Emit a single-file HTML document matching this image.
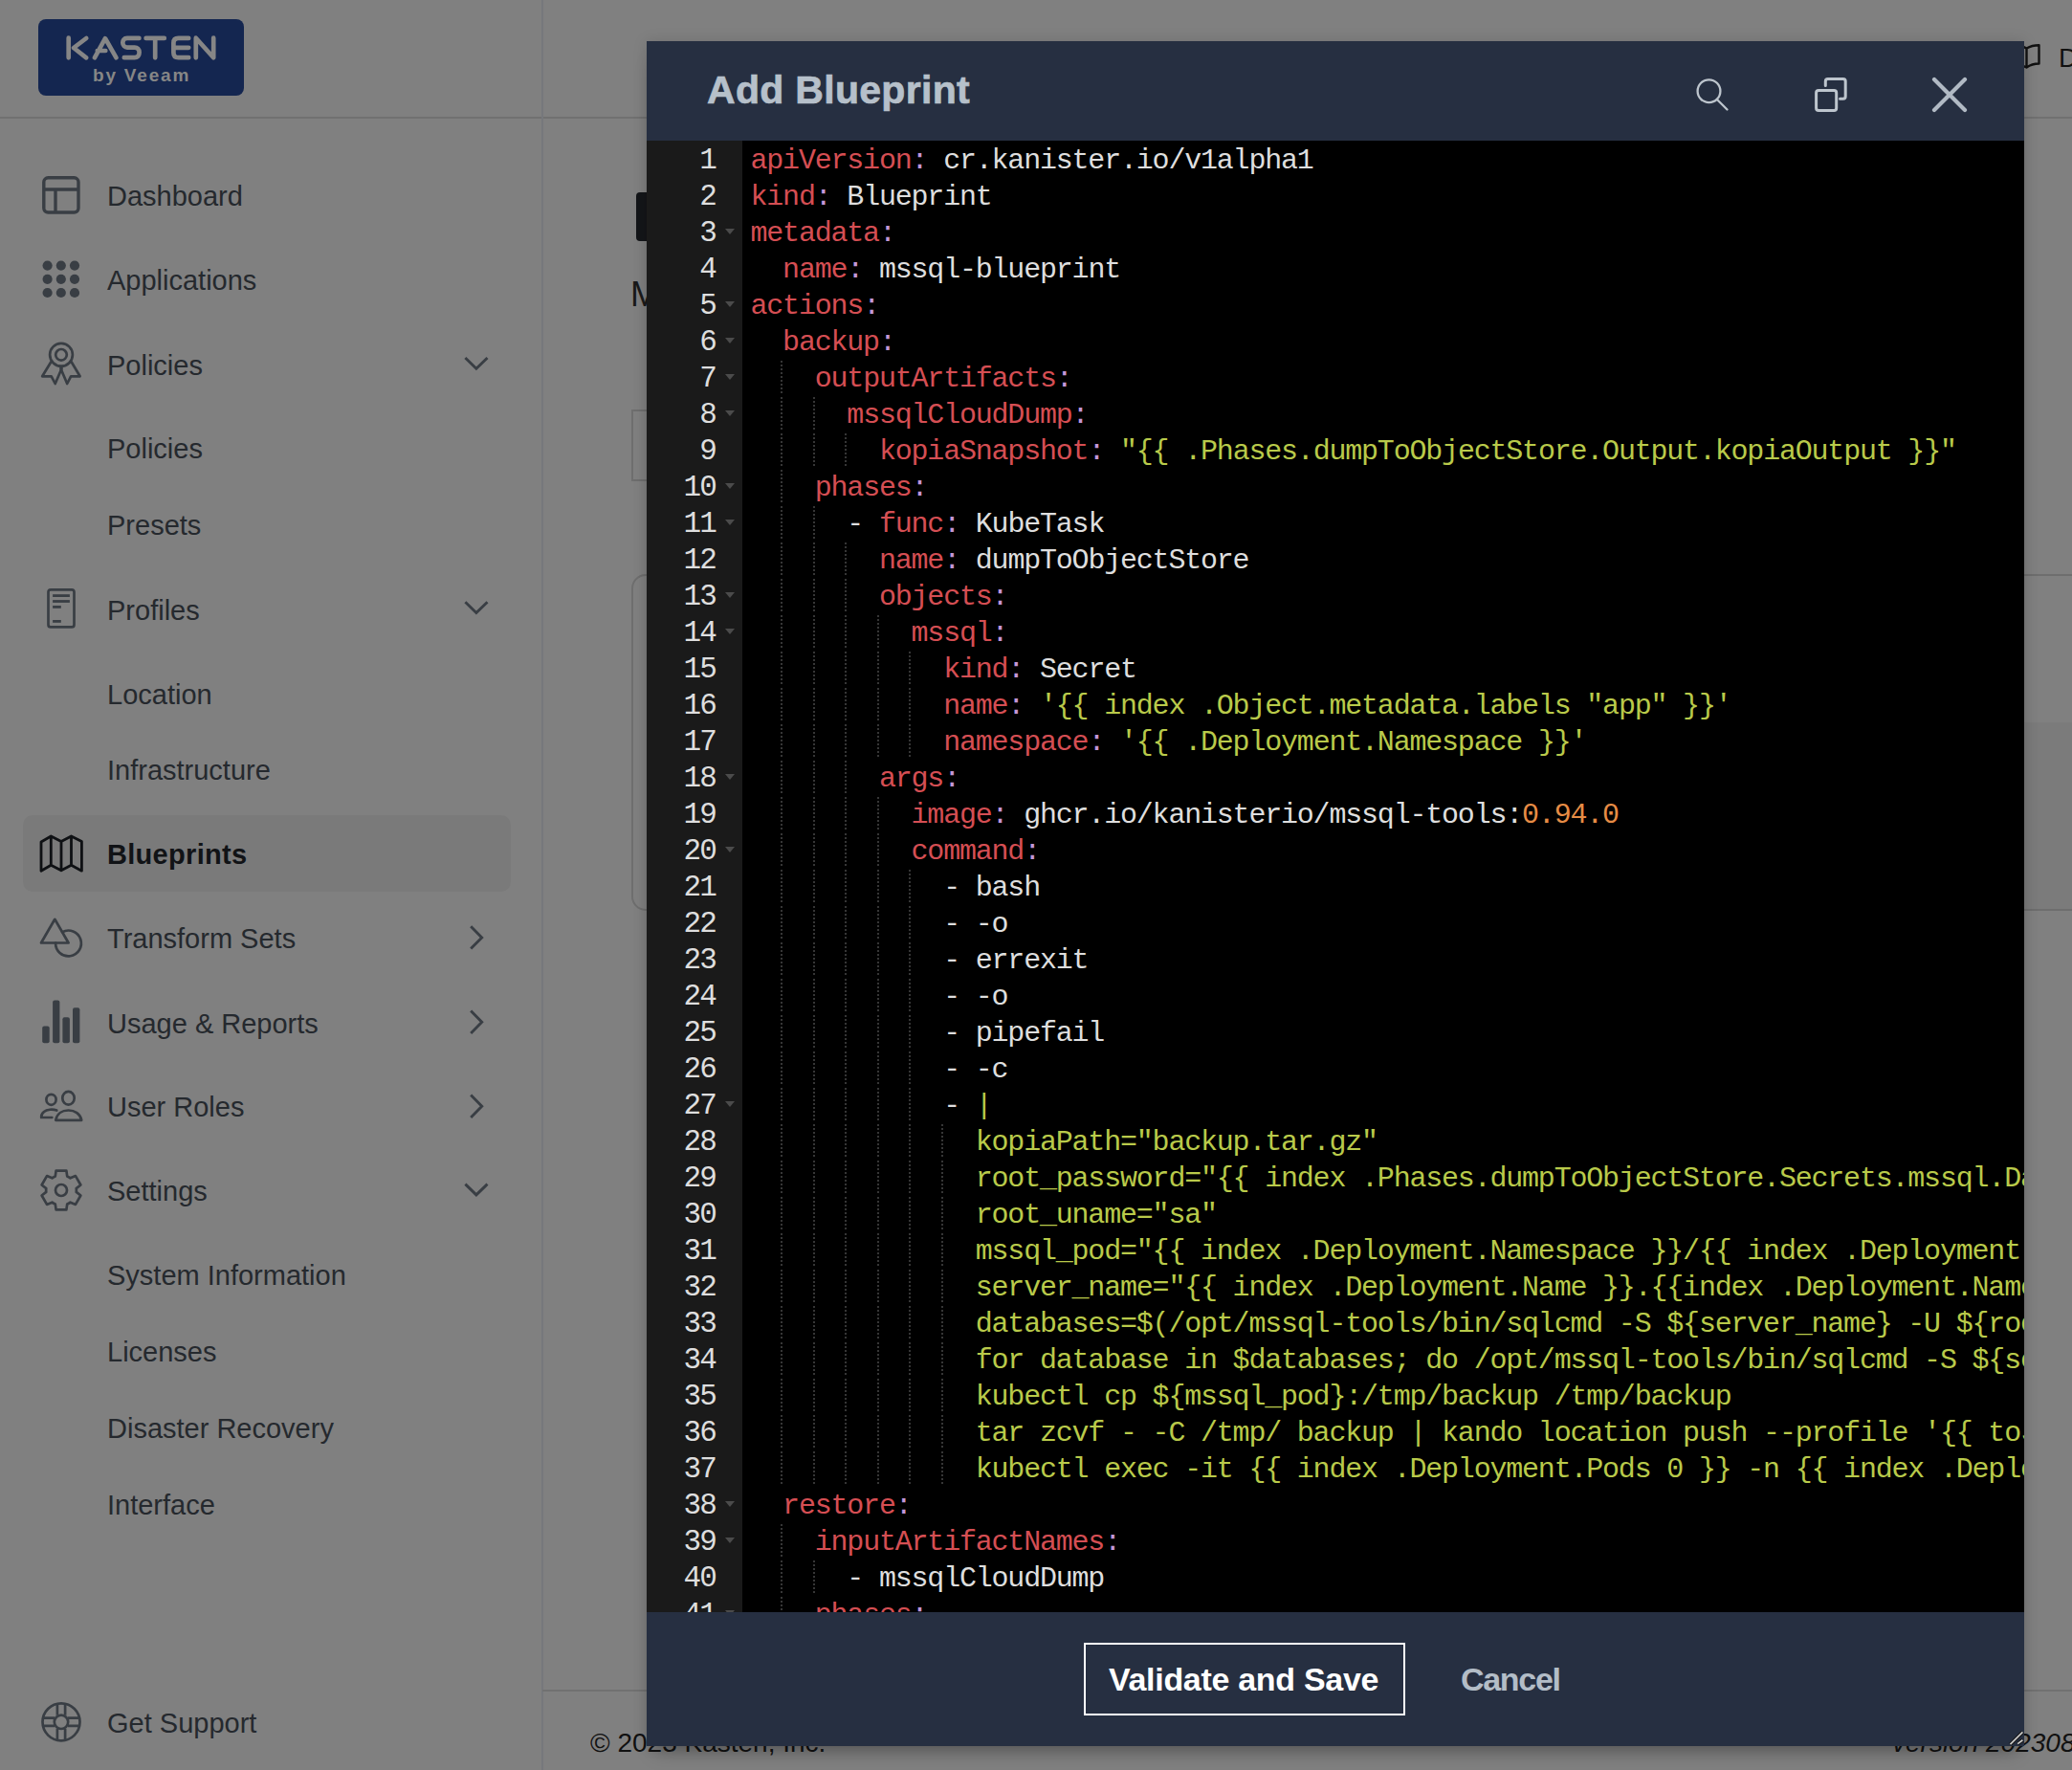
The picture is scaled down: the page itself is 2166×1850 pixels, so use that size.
<!DOCTYPE html>
<html><head><meta charset="utf-8"><style>
html,body{margin:0;padding:0;}
body{width:2166px;height:1850px;position:relative;overflow:hidden;background:#808080;font-family:"Liberation Sans",sans-serif;}
.abs{position:absolute;}
.si{position:absolute;left:112px;font-size:29px;line-height:29px;color:#25292e;white-space:nowrap;letter-spacing:0px;}
.si.b{font-weight:bold;color:#111316;letter-spacing:0.3px;}
.ic{position:absolute;}
#modal{position:absolute;left:676px;top:43px;width:1440px;height:1782px;background:#262f41;box-shadow:0 14px 18px -8px rgba(0,0,0,0.28),0 0 14px rgba(0,0,0,0.13);}
#hdr{position:absolute;left:0;top:0;width:1440px;height:104px;}
#title{position:absolute;left:63px;top:31px;font-size:41px;line-height:41px;font-weight:bold;color:#b6c0ca;letter-spacing:0.3px;white-space:nowrap;-webkit-text-stroke:0.7px #b6c0ca;}
#ed{position:absolute;left:0;top:104px;width:1440px;height:1538px;background:#000;overflow:hidden;}
#gut{position:absolute;left:0;top:0;width:100px;height:1538px;background:#1a1a1a;}
.gn{position:absolute;right:28px;height:38px;line-height:41.5px;font-family:"Liberation Mono",monospace;font-size:31px;color:#dedede;letter-spacing:-1.8px;}
.fw{position:absolute;left:82px;width:0;height:0;border-left:5px solid transparent;border-right:5px solid transparent;border-top:6px solid #4b4b4b;}
#code{position:absolute;left:100px;top:0;width:1340px;height:1538px;overflow:hidden;}
.ln{position:absolute;left:8.5px;height:38px;line-height:42px;font-family:"Liberation Mono",monospace;font-size:30px;letter-spacing:-1.2px;color:#dedede;white-space:pre;}
.k{color:#d54e53;} .p{color:#c397d8;} .s{color:#b9ca4a;} .n{color:#e78c45;}
.g{position:absolute;width:2px;height:38px;background:repeating-linear-gradient(to bottom,transparent 0 2px,#363636 2px 4px);}
#ftr{position:absolute;left:0;top:1642px;width:1440px;height:140px;}
#btn{position:absolute;left:457px;top:32px;width:336px;height:76px;border:2px solid #fff;box-sizing:border-box;}
#btnt{position:absolute;left:483px;top:0;height:140px;line-height:140px;font-size:34px;font-weight:bold;color:#fff;letter-spacing:-0.3px;white-space:nowrap;}
#cancel{position:absolute;left:851px;top:0;height:140px;line-height:140px;font-size:34px;font-weight:bold;color:#b3bdc7;letter-spacing:-1.3px;white-space:nowrap;}
</style></head><body>
<!-- sidebar & page chrome -->
<div class="abs" style="left:0;top:122px;width:2166px;height:2px;background:#717171"></div>
<div class="abs" style="left:566px;top:0;width:2px;height:1850px;background:#76787c"></div>
<div class="abs" style="left:567px;top:1766px;width:1599px;height:2px;background:#717171"></div>
<div class="abs" style="left:40px;top:20px;width:215px;height:80px;border-radius:8px;background:#142650"></div>
<div class="abs" style="left:97px;top:69px;font-size:19px;line-height:19px;font-weight:bold;color:#868686;letter-spacing:1.8px;white-space:nowrap">by Veeam</div>
<div class="abs" style="left:24px;top:852px;width:510px;height:80px;border-radius:10px;background:#7a7a7a"></div>

<svg class="ic" style="left:0;top:0" width="567" height="1850" viewBox="0 0 567 1850">
 <g stroke="#393e44" fill="none" stroke-width="3.4" stroke-linejoin="round">
  <rect x="45.8" y="185.8" width="36.2" height="36.2" rx="4.5"/>
  <path d="M45.8 198 H82 M58 198 V222"/>
 </g>
 <g stroke="#393e44" fill="none" stroke-width="2.7" stroke-linejoin="round" stroke-linecap="round">
  <circle cx="64" cy="370.8" r="11.9"/><circle cx="64" cy="370.8" r="5.8"/>
  <path d="M53.2 378.5 L44.2 393.3 H53.7 L57.7 401 L64.6 385"/>
  <path d="M74.8 378.5 L83.6 393.3 H74.1 L70.2 401 L63.4 385"/>
  <rect x="50.5" y="616.3" width="27" height="39.1" rx="2.5"/>
 </g>
 <g fill="#393e44">
  <rect x="55.1" y="621.2" width="17.8" height="2.8"/><rect x="55.1" y="627.1" width="17.8" height="2.8"/>
  <rect x="55.1" y="633" width="8.7" height="2.8"/><rect x="55.1" y="648" width="8.7" height="2.8"/>
 </g>
 <g stroke="#0f1114" fill="none" stroke-width="2.8" stroke-linejoin="round">
  <path d="M43 880 L53.3 874 L64 879.5 L74.5 874 L85.4 879.5 V910.2 L74.5 904.2 L64 909.8 L53.3 904.2 L43 910.2 Z M53.3 874 V904.2 M64 879.5 V909.8 M74.5 874 V904.2"/>
 </g>
 <g stroke="#393e44" fill="none" stroke-width="2.7" stroke-linejoin="round" stroke-linecap="round">
  <path d="M57.3 960.8 L43 985.5 H71.6 Z"/>
  <path d="M65.1 974.2 A13.4 13.4 0 1 1 58.1 985.5"/>
  <ellipse cx="53.5" cy="1149.3" rx="5.1" ry="5.5"/><ellipse cx="71.5" cy="1147.7" rx="6.2" ry="6.9"/>
  <path d="M59.3 1160.6 C55 1159 49 1159.5 46 1162 C43.5 1164 43 1166 43.2 1168 H54.3"/>
  <path d="M58.3 1170.8 C59.5 1164 65 1160.5 71.5 1160.5 C78 1160.5 84 1164 85.2 1170.8 Z"/>
 </g>
 <g stroke="#393e44" fill="none" stroke-width="2.7" stroke-linejoin="round">
  <path d="M57.80 1229.40 L58.60 1223.60 L69.40 1223.60 L70.20 1229.40 A15.40 15.40 0 0 1 73.54 1231.33 L78.97 1229.12 L84.37 1238.48 L79.74 1242.07 A15.40 15.40 0 0 1 79.74 1245.93 L84.37 1249.52 L78.97 1258.88 L73.54 1256.67 A15.40 15.40 0 0 1 70.20 1258.60 L69.40 1264.40 L58.60 1264.40 L57.80 1258.60 A15.40 15.40 0 0 1 54.46 1256.67 L49.03 1258.88 L43.63 1249.52 L48.26 1245.93 A15.40 15.40 0 0 1 48.26 1242.07 L43.63 1238.48 L49.03 1229.12 L54.46 1231.33 A15.40 15.40 0 0 1 57.80 1229.40 Z"/>
  <circle cx="64" cy="1244" r="6"/>
  <circle cx="64" cy="1799.8" r="19.5"/><circle cx="64" cy="1799.8" r="7.2"/>
  <path d="M59.9 1780.5 V1792.8 M68.1 1780.5 V1792.8 M59.9 1806.8 V1819 M68.1 1806.8 V1819 M44.7 1795.7 H57 M44.7 1803.9 H57 M71 1795.7 H83.3 M71 1803.9 H83.3"/>
 </g>
 <g stroke="#393e44" fill="none" stroke-width="2.9" stroke-linejoin="miter">
  <path d="M486.4 374 L497.9 385.3 L509.5 374 M486.4 629.2 L497.9 640.5 L509.5 629.2 M486.4 1237.6 L497.9 1248.9 L509.5 1237.6"/>
  <path d="M492.2 968.3 L503.7 980 L492.2 991.6 M492.2 1056.6 L503.7 1068.3 L492.2 1079.9 M492.2 1144.6 L503.7 1156.3 L492.2 1167.9"/>
 </g>
 <g fill="#393e44">
  <circle cx="49.6" cy="277.6" r="5.1"/><circle cx="63.8" cy="277.6" r="5.1"/><circle cx="78" cy="277.6" r="5.1"/>
  <circle cx="49.6" cy="291.8" r="5.1"/><circle cx="63.8" cy="291.8" r="5.1"/><circle cx="78" cy="291.8" r="5.1"/>
  <circle cx="49.6" cy="306" r="5.1"/><circle cx="63.8" cy="306" r="5.1"/><circle cx="78" cy="306" r="5.1"/>
  <rect x="44.2" y="1072.4" width="7.5" height="17.8" rx="2"/><rect x="55.1" y="1045.5" width="7.3" height="44.7" rx="2"/>
  <rect x="65.4" y="1063.3" width="7.5" height="26.9" rx="2"/><rect x="76" y="1053.2" width="7.4" height="37" rx="2"/>
 </g>
 <g stroke="#868686" fill="none" stroke-width="4.7" stroke-linecap="round" stroke-linejoin="round">
  <path d="M71.7 39.7 V60.3 M90.2 40 L77 50 L90.2 60.3"/>
  <path d="M98.9 60.3 L110 40.2 L121.5 60.3 M101.8 53 H110.3"/>
  <path d="M145.4 39.9 H133 C129.5 39.9 128.3 42.5 128.3 44.6 C128.3 47.5 130.5 49.6 133 49.6 H140.8 C143.5 49.6 145.6 51.5 145.6 54.8 C145.6 58.5 143.5 60.2 140.8 60.2 H129.8"/>
  <path d="M152.6 39.9 H171.8 M162.2 39.9 V60.3"/>
  <path d="M197.2 39.9 H186.5 C183 39.9 181.4 42 181.4 45 V55 C181.4 58.2 183 60.2 186.5 60.2 H197.2 M182 49.8 H197.2"/>
  <path d="M204.8 60.3 V39.7 L223.2 60.3 V39.7"/>
 </g>
</svg>
<div class="si" style="top:191.4px">Dashboard</div>
<div class="si" style="top:279.4px">Applications</div>
<div class="si" style="top:367.9px">Policies</div>
<div class="si" style="top:455.4px">Policies</div>
<div class="si" style="top:535.4px">Presets</div>
<div class="si" style="top:623.9px">Profiles</div>
<div class="si" style="top:712.0px">Location</div>
<div class="si" style="top:791.4px">Infrastructure</div>
<div class="si b" style="top:879.1px">Blueprints</div>
<div class="si" style="top:967.4px">Transform Sets</div>
<div class="si" style="top:1056.1px">Usage &amp; Reports</div>
<div class="si" style="top:1143.2px">User Roles</div>
<div class="si" style="top:1231.4px">Settings</div>
<div class="si" style="top:1319.4px">System Information</div>
<div class="si" style="top:1399.4px">Licenses</div>
<div class="si" style="top:1479.4px">Disaster Recovery</div>
<div class="si" style="top:1559.4px">Interface</div>
<div class="si" style="top:1787.1px">Get Support</div>
<!-- content behind -->
<div class="abs" style="left:665px;top:201px;width:20px;height:51px;border-radius:4px;background:#141619"></div>
<div class="abs" style="left:659px;top:290px;font-size:36px;line-height:36px;color:#1a1a1a">M</div>
<div class="abs" style="left:660px;top:428px;width:40px;height:75px;border:2px solid #6e6e6e;box-sizing:border-box"></div>
<div class="abs" style="left:660px;top:600px;width:1600px;height:352px;border:2px solid #6e6e6e;border-radius:15px;box-sizing:border-box"></div>
<div class="abs" style="left:2116px;top:755px;width:60px;height:195px;background:#7b7b7b"></div>
<svg class="abs" style="left:2100px;top:40px" width="66" height="40" viewBox="2100 40 66 40"><path d="M2105 51 C2109 48.3 2113 47.2 2118.5 50.5 C2122 48.5 2127 47.2 2131.5 47.2 V66.5 C2127 66.5 2122 68 2118.5 70.5 C2113 67.5 2109 67.5 2105 70 M2118.5 50.5 V70.5" stroke="#111" stroke-width="2.4" fill="none" stroke-linejoin="round"/></svg>
<div class="abs" style="left:2152px;top:47px;font-size:28px;line-height:28px;color:#111">D</div>
<div class="abs" style="left:617px;top:1808px;font-size:28px;line-height:28px;color:#111;white-space:nowrap">© 2023 Kasten, Inc.</div>
<div class="abs" style="left:1978px;top:1808px;font-size:28px;line-height:28px;color:#111;font-style:italic;white-space:nowrap">version 20230808</div>
<!-- modal -->
<div id="modal">
 <div id="hdr"><div id="title">Add Blueprint</div>
  <svg class="abs" style="left:0;top:0" width="1440" height="104" viewBox="676 43 1440 104">
   <g stroke="#bdc5cd" fill="none" stroke-linecap="round" stroke-linejoin="round">
    <circle cx="1786.5" cy="95.2" r="11.9" stroke-width="2.3"/>
    <path d="M1795.2 104.3 L1805.5 114.5" stroke-width="2.3"/>
    <rect x="1898.6" y="94.5" width="21.1" height="20.9" rx="2.5" stroke-width="3"/>
    <path d="M1908.3 89.5 V85 C1908.3 83.5 1909.3 82.4 1910.8 82.4 H1926.7 C1928.2 82.4 1929.2 83.5 1929.2 85 V100.8 C1929.2 102.3 1928.2 103.3 1926.7 103.3 H1923.5" stroke-width="3"/>
   </g>
   <path d="M2022 83 L2054 115 M2054 83 L2022 115" stroke="#b1bac4" stroke-width="4.2" stroke-linecap="round"/>
  </svg>
 </div>
 <div id="ed">
  <div id="gut"><div class="gn" style="top:0px">1</div>
<div class="gn" style="top:38px">2</div>
<div class="gn" style="top:76px">3</div>
<i class="fw" style="top:92px"></i>
<div class="gn" style="top:114px">4</div>
<div class="gn" style="top:152px">5</div>
<i class="fw" style="top:168px"></i>
<div class="gn" style="top:190px">6</div>
<i class="fw" style="top:206px"></i>
<div class="gn" style="top:228px">7</div>
<i class="fw" style="top:244px"></i>
<div class="gn" style="top:266px">8</div>
<i class="fw" style="top:282px"></i>
<div class="gn" style="top:304px">9</div>
<div class="gn" style="top:342px">10</div>
<i class="fw" style="top:358px"></i>
<div class="gn" style="top:380px">11</div>
<i class="fw" style="top:396px"></i>
<div class="gn" style="top:418px">12</div>
<div class="gn" style="top:456px">13</div>
<i class="fw" style="top:472px"></i>
<div class="gn" style="top:494px">14</div>
<i class="fw" style="top:510px"></i>
<div class="gn" style="top:532px">15</div>
<div class="gn" style="top:570px">16</div>
<div class="gn" style="top:608px">17</div>
<div class="gn" style="top:646px">18</div>
<i class="fw" style="top:662px"></i>
<div class="gn" style="top:684px">19</div>
<div class="gn" style="top:722px">20</div>
<i class="fw" style="top:738px"></i>
<div class="gn" style="top:760px">21</div>
<div class="gn" style="top:798px">22</div>
<div class="gn" style="top:836px">23</div>
<div class="gn" style="top:874px">24</div>
<div class="gn" style="top:912px">25</div>
<div class="gn" style="top:950px">26</div>
<div class="gn" style="top:988px">27</div>
<i class="fw" style="top:1004px"></i>
<div class="gn" style="top:1026px">28</div>
<div class="gn" style="top:1064px">29</div>
<div class="gn" style="top:1102px">30</div>
<div class="gn" style="top:1140px">31</div>
<div class="gn" style="top:1178px">32</div>
<div class="gn" style="top:1216px">33</div>
<div class="gn" style="top:1254px">34</div>
<div class="gn" style="top:1292px">35</div>
<div class="gn" style="top:1330px">36</div>
<div class="gn" style="top:1368px">37</div>
<div class="gn" style="top:1406px">38</div>
<i class="fw" style="top:1422px"></i>
<div class="gn" style="top:1444px">39</div>
<i class="fw" style="top:1460px"></i>
<div class="gn" style="top:1482px">40</div>
<div class="gn" style="top:1520px">41</div>
<i class="fw" style="top:1536px"></i>
<div class="gn" style="top:1558px">42</div>
<i class="fw" style="top:1574px"></i></div>
  <div id="code"><div class="ln" style="top:0px"><span class="k">apiVersion</span><span class="p">:</span> cr.kanister.io/v1alpha1</div>
<div class="ln" style="top:38px"><span class="k">kind</span><span class="p">:</span> Blueprint</div>
<div class="ln" style="top:76px"><span class="k">metadata</span><span class="p">:</span></div>
<div class="ln" style="top:114px">  <span class="k">name</span><span class="p">:</span> mssql-blueprint</div>
<div class="ln" style="top:152px"><span class="k">actions</span><span class="p">:</span></div>
<div class="ln" style="top:190px">  <span class="k">backup</span><span class="p">:</span></div>
<i class="g" style="left:40.0px;top:228px"></i>
<div class="ln" style="top:228px">    <span class="k">outputArtifacts</span><span class="p">:</span></div>
<i class="g" style="left:40.0px;top:266px"></i>
<i class="g" style="left:73.6px;top:266px"></i>
<div class="ln" style="top:266px">      <span class="k">mssqlCloudDump</span><span class="p">:</span></div>
<i class="g" style="left:40.0px;top:304px"></i>
<i class="g" style="left:73.6px;top:304px"></i>
<i class="g" style="left:107.2px;top:304px"></i>
<div class="ln" style="top:304px">        <span class="k">kopiaSnapshot</span><span class="p">:</span> <span class="s">&quot;{{ .Phases.dumpToObjectStore.Output.kopiaOutput }}&quot;</span></div>
<i class="g" style="left:40.0px;top:342px"></i>
<div class="ln" style="top:342px">    <span class="k">phases</span><span class="p">:</span></div>
<i class="g" style="left:40.0px;top:380px"></i>
<i class="g" style="left:73.6px;top:380px"></i>
<div class="ln" style="top:380px">      - <span class="k">func</span><span class="p">:</span> KubeTask</div>
<i class="g" style="left:40.0px;top:418px"></i>
<i class="g" style="left:73.6px;top:418px"></i>
<i class="g" style="left:107.2px;top:418px"></i>
<div class="ln" style="top:418px">        <span class="k">name</span><span class="p">:</span> dumpToObjectStore</div>
<i class="g" style="left:40.0px;top:456px"></i>
<i class="g" style="left:73.6px;top:456px"></i>
<i class="g" style="left:107.2px;top:456px"></i>
<div class="ln" style="top:456px">        <span class="k">objects</span><span class="p">:</span></div>
<i class="g" style="left:40.0px;top:494px"></i>
<i class="g" style="left:73.6px;top:494px"></i>
<i class="g" style="left:107.2px;top:494px"></i>
<i class="g" style="left:140.8px;top:494px"></i>
<div class="ln" style="top:494px">          <span class="k">mssql</span><span class="p">:</span></div>
<i class="g" style="left:40.0px;top:532px"></i>
<i class="g" style="left:73.6px;top:532px"></i>
<i class="g" style="left:107.2px;top:532px"></i>
<i class="g" style="left:140.8px;top:532px"></i>
<i class="g" style="left:174.4px;top:532px"></i>
<div class="ln" style="top:532px">            <span class="k">kind</span><span class="p">:</span> Secret</div>
<i class="g" style="left:40.0px;top:570px"></i>
<i class="g" style="left:73.6px;top:570px"></i>
<i class="g" style="left:107.2px;top:570px"></i>
<i class="g" style="left:140.8px;top:570px"></i>
<i class="g" style="left:174.4px;top:570px"></i>
<div class="ln" style="top:570px">            <span class="k">name</span><span class="p">:</span> <span class="s">&#x27;{{ index .Object.metadata.labels &quot;app&quot; }}&#x27;</span></div>
<i class="g" style="left:40.0px;top:608px"></i>
<i class="g" style="left:73.6px;top:608px"></i>
<i class="g" style="left:107.2px;top:608px"></i>
<i class="g" style="left:140.8px;top:608px"></i>
<i class="g" style="left:174.4px;top:608px"></i>
<div class="ln" style="top:608px">            <span class="k">namespace</span><span class="p">:</span> <span class="s">&#x27;{{ .Deployment.Namespace }}&#x27;</span></div>
<i class="g" style="left:40.0px;top:646px"></i>
<i class="g" style="left:73.6px;top:646px"></i>
<i class="g" style="left:107.2px;top:646px"></i>
<div class="ln" style="top:646px">        <span class="k">args</span><span class="p">:</span></div>
<i class="g" style="left:40.0px;top:684px"></i>
<i class="g" style="left:73.6px;top:684px"></i>
<i class="g" style="left:107.2px;top:684px"></i>
<i class="g" style="left:140.8px;top:684px"></i>
<div class="ln" style="top:684px">          <span class="k">image</span><span class="p">:</span> ghcr.io/kanisterio/mssql-tools:<span class="n">0.94.0</span></div>
<i class="g" style="left:40.0px;top:722px"></i>
<i class="g" style="left:73.6px;top:722px"></i>
<i class="g" style="left:107.2px;top:722px"></i>
<i class="g" style="left:140.8px;top:722px"></i>
<div class="ln" style="top:722px">          <span class="k">command</span><span class="p">:</span></div>
<i class="g" style="left:40.0px;top:760px"></i>
<i class="g" style="left:73.6px;top:760px"></i>
<i class="g" style="left:107.2px;top:760px"></i>
<i class="g" style="left:140.8px;top:760px"></i>
<i class="g" style="left:174.4px;top:760px"></i>
<div class="ln" style="top:760px">            - bash</div>
<i class="g" style="left:40.0px;top:798px"></i>
<i class="g" style="left:73.6px;top:798px"></i>
<i class="g" style="left:107.2px;top:798px"></i>
<i class="g" style="left:140.8px;top:798px"></i>
<i class="g" style="left:174.4px;top:798px"></i>
<div class="ln" style="top:798px">            - -o</div>
<i class="g" style="left:40.0px;top:836px"></i>
<i class="g" style="left:73.6px;top:836px"></i>
<i class="g" style="left:107.2px;top:836px"></i>
<i class="g" style="left:140.8px;top:836px"></i>
<i class="g" style="left:174.4px;top:836px"></i>
<div class="ln" style="top:836px">            - errexit</div>
<i class="g" style="left:40.0px;top:874px"></i>
<i class="g" style="left:73.6px;top:874px"></i>
<i class="g" style="left:107.2px;top:874px"></i>
<i class="g" style="left:140.8px;top:874px"></i>
<i class="g" style="left:174.4px;top:874px"></i>
<div class="ln" style="top:874px">            - -o</div>
<i class="g" style="left:40.0px;top:912px"></i>
<i class="g" style="left:73.6px;top:912px"></i>
<i class="g" style="left:107.2px;top:912px"></i>
<i class="g" style="left:140.8px;top:912px"></i>
<i class="g" style="left:174.4px;top:912px"></i>
<div class="ln" style="top:912px">            - pipefail</div>
<i class="g" style="left:40.0px;top:950px"></i>
<i class="g" style="left:73.6px;top:950px"></i>
<i class="g" style="left:107.2px;top:950px"></i>
<i class="g" style="left:140.8px;top:950px"></i>
<i class="g" style="left:174.4px;top:950px"></i>
<div class="ln" style="top:950px">            - -c</div>
<i class="g" style="left:40.0px;top:988px"></i>
<i class="g" style="left:73.6px;top:988px"></i>
<i class="g" style="left:107.2px;top:988px"></i>
<i class="g" style="left:140.8px;top:988px"></i>
<i class="g" style="left:174.4px;top:988px"></i>
<div class="ln" style="top:988px">            - <span class="s">|</span></div>
<i class="g" style="left:40.0px;top:1026px"></i>
<i class="g" style="left:73.6px;top:1026px"></i>
<i class="g" style="left:107.2px;top:1026px"></i>
<i class="g" style="left:140.8px;top:1026px"></i>
<i class="g" style="left:174.4px;top:1026px"></i>
<i class="g" style="left:208.0px;top:1026px"></i>
<div class="ln" style="top:1026px">              <span class="s">kopiaPath=&quot;backup.tar.gz&quot;</span></div>
<i class="g" style="left:40.0px;top:1064px"></i>
<i class="g" style="left:73.6px;top:1064px"></i>
<i class="g" style="left:107.2px;top:1064px"></i>
<i class="g" style="left:140.8px;top:1064px"></i>
<i class="g" style="left:174.4px;top:1064px"></i>
<i class="g" style="left:208.0px;top:1064px"></i>
<div class="ln" style="top:1064px">              <span class="s">root_password=&quot;{{ index .Phases.dumpToObjectStore.Secrets.mssql.Data.SA_PASSWORD | toString }}&quot;</span></div>
<i class="g" style="left:40.0px;top:1102px"></i>
<i class="g" style="left:73.6px;top:1102px"></i>
<i class="g" style="left:107.2px;top:1102px"></i>
<i class="g" style="left:140.8px;top:1102px"></i>
<i class="g" style="left:174.4px;top:1102px"></i>
<i class="g" style="left:208.0px;top:1102px"></i>
<div class="ln" style="top:1102px">              <span class="s">root_uname=&quot;sa&quot;</span></div>
<i class="g" style="left:40.0px;top:1140px"></i>
<i class="g" style="left:73.6px;top:1140px"></i>
<i class="g" style="left:107.2px;top:1140px"></i>
<i class="g" style="left:140.8px;top:1140px"></i>
<i class="g" style="left:174.4px;top:1140px"></i>
<i class="g" style="left:208.0px;top:1140px"></i>
<div class="ln" style="top:1140px">              <span class="s">mssql_pod=&quot;{{ index .Deployment.Namespace }}/{{ index .Deployment.Pods 0 }}&quot;</span></div>
<i class="g" style="left:40.0px;top:1178px"></i>
<i class="g" style="left:73.6px;top:1178px"></i>
<i class="g" style="left:107.2px;top:1178px"></i>
<i class="g" style="left:140.8px;top:1178px"></i>
<i class="g" style="left:174.4px;top:1178px"></i>
<i class="g" style="left:208.0px;top:1178px"></i>
<div class="ln" style="top:1178px">              <span class="s">server_name=&quot;{{ index .Deployment.Name }}.{{index .Deployment.Namespace}}.svc.cluster.local&quot;</span></div>
<i class="g" style="left:40.0px;top:1216px"></i>
<i class="g" style="left:73.6px;top:1216px"></i>
<i class="g" style="left:107.2px;top:1216px"></i>
<i class="g" style="left:140.8px;top:1216px"></i>
<i class="g" style="left:174.4px;top:1216px"></i>
<i class="g" style="left:208.0px;top:1216px"></i>
<div class="ln" style="top:1216px">              <span class="s">databases=$(/opt/mssql-tools/bin/sqlcmd -S ${server_name} -U ${root_uname} -P ${root_password} -Q</span></div>
<i class="g" style="left:40.0px;top:1254px"></i>
<i class="g" style="left:73.6px;top:1254px"></i>
<i class="g" style="left:107.2px;top:1254px"></i>
<i class="g" style="left:140.8px;top:1254px"></i>
<i class="g" style="left:174.4px;top:1254px"></i>
<i class="g" style="left:208.0px;top:1254px"></i>
<div class="ln" style="top:1254px">              <span class="s">for database in $databases; do /opt/mssql-tools/bin/sqlcmd -S ${server_name} -U ${root_uname}</span></div>
<i class="g" style="left:40.0px;top:1292px"></i>
<i class="g" style="left:73.6px;top:1292px"></i>
<i class="g" style="left:107.2px;top:1292px"></i>
<i class="g" style="left:140.8px;top:1292px"></i>
<i class="g" style="left:174.4px;top:1292px"></i>
<i class="g" style="left:208.0px;top:1292px"></i>
<div class="ln" style="top:1292px">              <span class="s">kubectl cp ${mssql_pod}:/tmp/backup /tmp/backup</span></div>
<i class="g" style="left:40.0px;top:1330px"></i>
<i class="g" style="left:73.6px;top:1330px"></i>
<i class="g" style="left:107.2px;top:1330px"></i>
<i class="g" style="left:140.8px;top:1330px"></i>
<i class="g" style="left:174.4px;top:1330px"></i>
<i class="g" style="left:208.0px;top:1330px"></i>
<div class="ln" style="top:1330px">              <span class="s">tar zcvf - -C /tmp/ backup | kando location push --profile &#x27;{{ toJson .Profile }}&#x27; --path</span></div>
<i class="g" style="left:40.0px;top:1368px"></i>
<i class="g" style="left:73.6px;top:1368px"></i>
<i class="g" style="left:107.2px;top:1368px"></i>
<i class="g" style="left:140.8px;top:1368px"></i>
<i class="g" style="left:174.4px;top:1368px"></i>
<i class="g" style="left:208.0px;top:1368px"></i>
<div class="ln" style="top:1368px">              <span class="s">kubectl exec -it {{ index .Deployment.Pods 0 }} -n {{ index .Deployment.Namespace }} -- rm</span></div>
<div class="ln" style="top:1406px">  <span class="k">restore</span><span class="p">:</span></div>
<i class="g" style="left:40.0px;top:1444px"></i>
<div class="ln" style="top:1444px">    <span class="k">inputArtifactNames</span><span class="p">:</span></div>
<i class="g" style="left:40.0px;top:1482px"></i>
<i class="g" style="left:73.6px;top:1482px"></i>
<div class="ln" style="top:1482px">      - mssqlCloudDump</div>
<i class="g" style="left:40.0px;top:1520px"></i>
<div class="ln" style="top:1520px">    <span class="k">phases</span><span class="p">:</span></div>
<i class="g" style="left:40.0px;top:1558px"></i>
<div class="ln" style="top:1558px">    - <span class="k">func</span><span class="p">:</span> KubeTask</div></div>
 </div>
 <svg class="abs" style="left:1420px;top:1762px" width="20" height="20" viewBox="2096 1805 20 20"><path d="M2101.5 1823.2 L2114.4 1810.4 M2109.2 1822.6 L2114.4 1818.7" stroke="#111" stroke-width="3.6"/><path d="M2101.5 1823.2 L2114.4 1810.4 M2109.2 1822.6 L2114.4 1818.7" stroke="#c8c8c8" stroke-width="1.8"/></svg>
 <div id="ftr">
  <div id="btn"></div>
  <div id="btnt">Validate and Save</div>
  <div id="cancel">Cancel</div>
 </div>
</div>
</body></html>
